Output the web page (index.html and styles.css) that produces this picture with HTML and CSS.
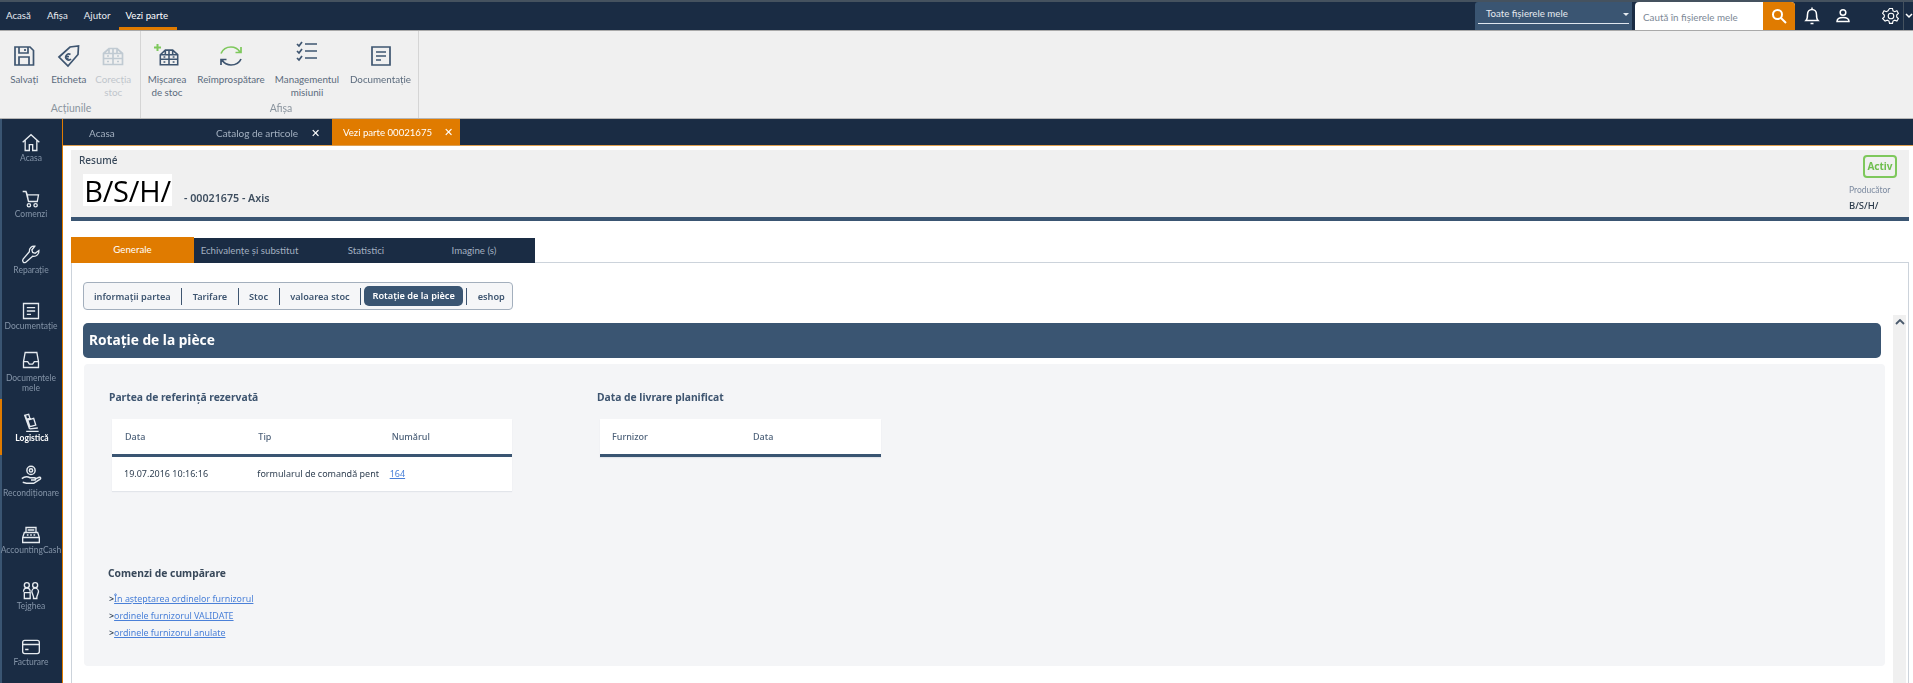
FILE: index.html
```html
<!DOCTYPE html>
<html lang="ro">
<head>
<meta charset="utf-8">
<title>Vezi parte 00021675</title>
<link rel="stylesheet" href="styles.css">
</head>
<body>
<svg class="defs" width="0" height="0" aria-hidden="true">
  <symbol id="warehouse" viewBox="0 0 24 24">
    <path d="M2.500 9.500 8 4.500h8l5.500 5v11h-19zM2.500 14.500h19M12 4.500v16M8 4.500v5M16 4.500v5M2.500 9.500h19M6 17.500h2M16 17.500h2M6 12h2M16 12h2" />
  </symbol>
  <symbol id="doc" viewBox="0 0 24 24">
    <path d="M3 3h18v18H3zM7 8h10M7 12h10M7 16h5" />
  </symbol>
</svg>
<div class="app">
  <header class="topbar">
    <nav class="menu">
      <span class="menu-item">Acasă</span>
      <span class="menu-item">Afișa</span>
      <span class="menu-item">Ajutor</span>
      <span class="menu-item is-active">Vezi parte</span>
    </nav>
    <div class="top-tools">
      <div class="scope"><span class="scope-text">Toate fișierele mele</span><span class="scope-caret"></span></div>
      <div class="search">
        <span class="search-text">Caută în fișierele mele</span>
        <span class="search-btn">
          <svg width="18" height="18" viewBox="0 0 18 18" class="ico-white"><circle cx="7.500" cy="7.500" r="4.500"/><path d="m11 11 5 5"/></svg>
        </span>
      </div>
      <svg class="tool tool-bell" width="18" height="20" viewBox="0 0 18 20"><path d="M3 14.500c1.500-1.500 1.500-3 1.500-6C4.500 5.500 6.500 3.500 9 3.500s4.500 2 4.500 5c0 3 0 4.500 1.500 6zM9 1.500v2M7.500 17.500h3"/></svg>
      <svg class="tool tool-user" width="16" height="16" viewBox="0 0 16 16"><circle cx="8" cy="4.500" r="2.800"/><path d="M2 13.500c0-3 2.500-4 6-4s6 1 6 4z"/></svg>
      <svg class="tool tool-gear" width="18" height="18" viewBox="0 0 18 18"><path d="M7.500 1.500h3l.5 2.300 1.700.9 2.200-.9 1.500 2.600-1.700 1.600v1.900l1.700 1.600-1.500 2.600-2.200-.9-1.700.9-.5 2.300h-3l-.5-2.300-1.700-.9-2.200.9L.6 11.500l1.700-1.600V8L.6 6.400l1.500-2.600 2.200.9L6 3.800z"/><circle cx="9" cy="9" r="2.800"/></svg>
      <span class="tool-more"><svg width="8" height="6" viewBox="0 0 8 6"><path d="m1 1 3 3 3-3"/></svg></span>
    </div>
  </header>

  <section class="ribbon">
    <div class="rgroup rgroup-a">
      <div class="ritems">
        <div class="ritem w-a">
          <svg class="ricon" width="24" height="24" viewBox="0 0 24 24"><path d="M3 3h15l3.500 3.500V21H3zM7 3v6h9V3M13 5v2M7 21v-8h10v8"/></svg>
          <span>Salvați</span>
        </div>
        <div class="ritem w-a">
          <svg class="ricon" width="24" height="24" viewBox="0 0 24 24"><path d="M2 13 13 3l8.500-1-.5 8.500L11 22zM17.500 5.500h.01M13.500 10.500a3 3 0 1 0 .5 4.500M8 12.500h4M8.500 14.500h3"/></svg>
          <span>Eticheta</span>
        </div>
        <div class="ritem w-a is-disabled">
          <svg class="ricon" width="26" height="24" viewBox="0 0 24 24"><use href="#warehouse"/></svg>
          <span>Corecția<br>stoc</span>
        </div>
      </div>
      <div class="rlabel">Acțiunile</div>
    </div>
    <div class="rgroup rgroup-b">
      <div class="ritems">
        <div class="ritem w-b1">
          <svg class="ricon" width="26" height="24" viewBox="0 0 26 24"><g transform="translate(4 2)"><use href="#warehouse" width="22" height="22"/></g><path class="green-fill" d="M2.500 0h2v2.500H7v2H4.500V7h-2V4.500H0v-2h2.500z"/></svg>
          <span>Mișcarea<br>de stoc</span>
        </div>
        <div class="ritem w-b2">
          <svg class="ricon" width="24" height="24" viewBox="0 0 24 24"><path class="green" d="M2 9.500C4 5 8 3 12 3s7 2 9 5M22 3v5.500h-5.500"/><path d="M22 15c-2 4.500-6 6-10 6s-7-2-9-5M2 21v-5.500h5.500"/></svg>
          <span>Reîmprospătare</span>
        </div>
        <div class="ritem w-b3">
          <svg class="ricon ricon-up" width="24" height="24" viewBox="0 0 24 24"><path d="M2 5l2 2 3-4M10 5h12M2 12l2 2 3-4M10 12h12M2 19l2 2 3-4M10 19h12"/></svg>
          <span>Managementul<br>misiunii</span>
        </div>
        <div class="ritem w-b4">
          <svg class="ricon" width="24" height="24" viewBox="0 0 24 24"><use href="#doc"/></svg>
          <span>Documentație</span>
        </div>
      </div>
      <div class="rlabel">Afișa</div>
    </div>
  </section>

  <div class="main">
    <aside class="side">
      <div class="side-item">
        <svg class="side-ico" width="20" height="20" viewBox="0 0 24 24"><path d="M2 11 12 2l10 9M5 9v12h5v-7h4v7h5V9"/></svg>
        <span>Acasa</span>
      </div>
      <div class="side-item">
        <svg class="side-ico" width="20" height="20" viewBox="0 0 24 24"><path d="M2 3h4l1.500 4H21l-1.500 8H9L6 3M7.500 7 9 15"/><circle cx="9.500" cy="19.500" r="2"/><circle cx="17.500" cy="19.500" r="2"/></svg>
        <span>Comenzi</span>
      </div>
      <div class="side-item">
        <svg class="side-ico" width="20" height="20" viewBox="0 0 24 24"><path d="M21.500 6.500 17 10l-3-1-1-3 3.500-4.500C13 1 9.500 3.500 10 8L2.500 17c-1.500 2 .5 5 3 4L14 13.500c4.500 1 8-3 7.500-7z"/></svg>
        <span>Reparație</span>
      </div>
      <div class="side-item">
        <svg class="side-ico" width="20" height="20" viewBox="0 0 24 24"><use href="#doc"/></svg>
        <span>Documentație</span>
      </div>
      <div class="side-item side-two">
        <svg class="side-ico" width="20" height="20" viewBox="0 0 24 24"><path d="M3 14 5 3h14l2 11v7H3zM3 14h5l2 3h4l2-3h5"/></svg>
        <span>Documentele<br>mele</span>
      </div>
      <div class="side-item is-active">
        <svg class="side-ico" width="20" height="20" viewBox="0 0 24 24"><path d="M4 2.500 8 1.500l1.500 5-4 1zM7 8.500l7-2 2.500 8-7 2zM3 2l6 17M5 22h15M9 19l10-1"/></svg>
        <span>Logistică</span>
      </div>
      <div class="side-item side-low">
        <svg class="side-ico" width="22" height="22" viewBox="0 0 24 24"><circle cx="12" cy="7" r="4.500"/><circle cx="12" cy="7" r="1.800"/><path d="M2 16c3-2.500 6-2.500 9-1h5c1.500 0 1.500 2.500 0 2.500h-4M16 16.500l5-2c1.500-.5 2 1 1 2l-7 4.500H7l-4-1"/></svg>
        <span>Recondiționare</span>
      </div>
      <div class="side-item">
        <svg class="side-ico" width="20" height="20" viewBox="0 0 24 24"><path d="M6 3h12v6H6zM4 9h16l2 6v6H2v-6zM2 15h20M8 6h8M7 12h2M11 12h2M15 12h2"/></svg>
        <span>AccountingCash</span>
      </div>
      <div class="side-item">
        <svg class="side-ico" width="20" height="20" viewBox="0 0 24 24"><circle cx="7" cy="5" r="3"/><circle cx="17" cy="5" r="3"/><path d="M3 13c0-3 2-4.500 4-4.500s4 1.500 4 4.500M13 13c0-2.500 2-4.500 4-4.500s4 2 4 4.500l-2 6v2h-4v-2zM4 14h7v7H4z"/></svg>
        <span>Tejghea</span>
      </div>
      <div class="side-item">
        <svg class="side-ico" width="20" height="20" viewBox="0 0 24 24"><rect x="2" y="4" width="20" height="16" rx="2.500"/><path d="M2 9h20M5 15h4"/></svg>
        <span>Facturare</span>
      </div>
    </aside>

    <div class="work">
      <div class="doc-tabs">
        <div class="doc-tab tab-home">Acasa</div>
        <div class="doc-tab tab-cat">Catalog de articole <span class="doc-x">✕</span></div>
        <div class="doc-tab tab-cur">Vezi parte 00021675 <span class="doc-x">✕</span></div>
      </div>
      <div class="page">
        <section class="summary">
          <div class="sum-left">
            <div class="sum-title">Resumé</div>
            <div class="sum-row">
              <div class="logo">B/S/H/</div>
              <div class="sum-ref">- 00021675 - Axis</div>
            </div>
          </div>
          <div class="sum-right">
            <div class="badge">Activ</div>
            <div class="maker">
              <div class="maker-label">Producător</div>
              <div class="maker-value">B/S/H/</div>
            </div>
          </div>
        </section>

        <div class="tabs">
          <div class="tab tab-on">Generale</div>
          <div class="tab t-2">Echivalențe și substitut</div>
          <div class="tab t-3">Statistici</div>
          <div class="tab t-4">Imagine (s)</div>
        </div>

        <section class="pane">
          <nav class="subnav">
            <span class="sub">informații partea</span>
            <span class="sub">Tarifare</span>
            <span class="sub">Stoc</span>
            <span class="sub sub-before">valoarea stoc</span>
            <span class="sub-pill">Rotație de la pièce</span>
            <span class="sub sub-last">eshop</span>
          </nav>
          <h1 class="band">Rotație de la pièce</h1>
          <div class="scrollbar"><svg width="10" height="6" viewBox="0 0 10 6"><path d="m1 5 4-4 4 4"/></svg></div>
          <div class="panel">
            <div class="cols">
              <div class="col-a">
                <h2 class="ptitle">Partea de referință rezervată</h2>
                <table class="grid grid-a">
                  <thead><tr><th>Data</th><th>Tip</th><th>Numărul</th></tr></thead>
                  <tbody><tr>
                    <td>19.07.2016 10:16:16</td>
                    <td>formularul de comandă pent</td>
                    <td class="cell-link"><a class="lnk" href="#">164</a></td>
                  </tr></tbody>
                </table>
              </div>
              <div class="col-b">
                <h2 class="ptitle">Data de livrare planificat</h2>
                <table class="grid grid-b">
                  <thead><tr><th>Furnizor</th><th>Data</th></tr></thead>
                </table>
              </div>
            </div>
            <h2 class="ptitle ptitle-orders">Comenzi de cumpărare</h2>
            <ul class="links">
              <li><a class="lnk" href="#">În așteptarea ordinelor furnizorul</a></li>
              <li><a class="lnk" href="#">ordinele furnizorul VALIDATE</a></li>
              <li><a class="lnk" href="#">ordinele furnizorul anulate</a></li>
            </ul>
          </div>
        </section>
      </div>
    </div>
  </div>
</div>
</body>
</html>
```
FILE: styles.css
```css
* { box-sizing: border-box; }
html, body { margin: 0; padding: 0; height: 683px; overflow: hidden; background: #fff; }
body { font-family: "Noto Sans", "Open Sans", sans-serif; color: #2e3e50; }
.defs { position: absolute; }
.app { width: 1913px; height: 683px; display: flex; flex-direction: column; filter: blur(.35px); }

/* top bar */
.topbar { height: 31px; background: #1a2c44; border-top: 2px solid #45525f; border-bottom: 1px solid #a9a9a9; display: flex; justify-content: space-between; font-family: Lato, sans-serif; }
.menu { display: flex; }
.menu-item { height: 28px; line-height: 27px; font-size: 9.700px; color: #e6ebf0; padding: 0 8px; }
.menu-item:first-child { padding-left: 6px; }
.menu-item.is-active { color: #fff; border-bottom: 3px solid #e07b00; padding: 0 9px 0 7px; }
.top-tools { display: flex; align-items: stretch; position: relative; height: 28px; }
.scope { width: 157px; background: #3a5572; position: relative; display: flex; align-items: flex-start; padding: 4px 3px 0 3px; border-radius: 3px 0 0 0; }
.scope-text { flex: 1; height: 18px; border-bottom: 1px solid #dfe6ee; color: #e6ebf0; font-size: 9.700px; line-height: 15px; padding-left: 8px; }
.scope-caret { position: absolute; right: 3px; top: 11px; border: 3px solid transparent; border-top: 3px solid #e6ebf0; border-bottom: 0; }
.search { width: 160px; margin-left: 3px; background: #fff; display: flex; border-radius: 4px 4px 0 0; overflow: hidden; }
.search-text { flex: 1; font-size: 9.800px; line-height: 31px; color: #7c8896; padding-left: 8px; }
.search-btn { width: 32px; background: #e07b00; display: flex; align-items: center; justify-content: center; }
.ico-white { fill: none; stroke: #fff; stroke-width: 2; }
.tool { fill: none; stroke: #fff; stroke-width: 1.500; align-self: center; }
.tool-bell { margin-left: 8px; }
.tool-user { margin-left: 14px; }
.tool-gear { margin-left: 31px; stroke-width: 1.100; }
.tool-more { width: 10px; margin-left: 3px; border-left: 1px solid #45525f; display: flex; align-items: center; justify-content: center; overflow: hidden; }
.tool-more svg { fill: none; stroke: #fff; stroke-width: 1.500; flex: none; }

/* ribbon */
.ribbon { height: 88px; background: #f0f0f0; display: flex; border-bottom: 1px solid #b5b5b5; font-family: Lato, sans-serif; }
.rgroup { display: flex; flex-direction: column; border-right: 1px solid #d5d5d5; }
.rgroup-a { width: 141px; padding-left: 2px; }
.rgroup-b { width: 278px; padding-left: 3px; }
.ritems { display: flex; height: 70px; }
.ritem { display: flex; flex-direction: column; align-items: center; font-size: 9.800px; line-height: 13px; color: #5b6b7d; text-align: center; padding-top: 13px; flex: none; }
.ritem span { display: block; margin-top: 5px; white-space: nowrap; }
.w-a { width: 44.500px; }
.w-b1 { width: 46px; }
.w-b2 { width: 82px; }
.w-b3 { width: 70px; }
.w-b4 { width: 77px; }
.ricon { fill: none; stroke: #3e5570; stroke-width: 1.700; flex: none; }
.ricon-up { margin-top: -5px; margin-bottom: 5px; }
.green { stroke: #7ec85c; }
.green-fill { fill: #7ec85c; stroke: none; }
.is-disabled { color: #c0c6cc; }
.is-disabled .ricon { stroke: #c0cad2; }
.rlabel { text-align: center; font-size: 10.500px; line-height: 15px; color: #8a949e; }

/* main */
.main { flex: 1; display: flex; min-height: 0; }
.side { width: 63px; flex: none; background: #1a2c44; border-left: 2px solid #3a5572; border-right: 1px solid #e07b00; display: flex; flex-direction: column; font-family: Lato, sans-serif; }
.side-item { height: 56px; flex: none; display: flex; flex-direction: column; align-items: center; padding-top: 14px; font-size: 8.500px; line-height: 10px; color: #8494a8; text-align: center; margin-left: -2px; }
.side-item span { display: block; margin-top: 0; white-space: nowrap; }
.side-two { padding-top: 7px; }
.side-two span { margin-top: 3px; }
.side-low { padding-top: 9px; }
.side-low span { margin-top: 2px; }
.side-ico { fill: none; stroke: #e6ebf0; stroke-width: 1.600; flex: none; }
.side-item.is-active { color: #fff; font-weight: 700; border-left: 2px solid #e07b00; }
.work { flex: 1; display: flex; flex-direction: column; min-width: 0; }
.doc-tabs { height: 27px; background: #1a2c44; border-bottom: 1px solid #e0a050; display: flex; font-family: Lato, sans-serif; }
.doc-tab { font-size: 10px; line-height: 28px; color: #a3b0c0; white-space: nowrap; }
.tab-home { width: 137px; padding-left: 26px; }
.tab-cat { width: 132px; padding-left: 16px; }
.tab-cur { width: 128px; padding-left: 11px; background: #e07b00; color: #fff; font-size: 9.600px; line-height: 26px; }
.doc-x { color: #fff; font-size: 11px; margin-left: 10px; }

.page { flex: 1; min-height: 0; display: flex; flex-direction: column; padding: 4px 4px 0 8px; }
.summary { height: 71px; flex: none; background: #f0f0f0; border-bottom: 4px solid #3a5572; display: flex; justify-content: space-between; padding: 0 12px 0 8px; }
.sum-title { font-size: 10px; line-height: 15px; font-weight: 500; padding-top: 3px; height: 19px; color: #38485a; }
.sum-row { display: flex; align-items: flex-end; padding-left: 4px; margin-top: 5px; }
.logo { width: 89px; height: 32px; background: #fff; color: #000; font-family: "Open Sans", sans-serif; font-size: 29px; line-height: 33px; text-align: center; letter-spacing: -.2px; }
.sum-ref { font-size: 10.700px; line-height: 15px; font-weight: 600; color: #3f4f60; margin-left: 12px; }
.sum-right { display: flex; flex-direction: column; align-items: flex-end; padding-top: 5px; }
.badge { width: 34px; height: 23px; border: 2px solid #7ec85c; border-radius: 4px; color: #6fbe4e; font-size: 10px; font-weight: 700; line-height: 19px; text-align: center; }
.maker { width: 48px; margin-top: 6px; }
.maker-label { font-family: Lato, sans-serif; font-size: 8.500px; line-height: 13px; color: #7c8aa0; white-space: nowrap; }
.maker-value { font-size: 9.500px; line-height: 15px; font-weight: 500; color: #2a3a4a; margin-top: 1px; }

.tabs { display: flex; margin-top: 16px; height: 26px; flex: none; align-items: flex-end; position: relative; z-index: 1; font-family: Lato, sans-serif; }
.tab { height: 25px; background: #1a2c44; color: #a3b0c0; font-size: 9.700px; line-height: 25px; text-align: center; white-space: nowrap; }
.tab-on { height: 26px; width: 123px; background: #e07b00; color: #fff; }
.t-2 { width: 111px; }
.t-3 { width: 122px; }
.t-4 { width: 108px; padding-right: 14px; }

.pane { flex: 1; min-height: 0; margin-top: -1px; border: 1px solid #ccd3db; border-bottom: 0; padding: 19px 0 0 11px; position: relative; }
.subnav { width: 430px; height: 28px; background: #f5f6f8; border: 1.500px solid #a3afbd; border-radius: 4px; display: flex; align-items: center; padding-left: 10px; }
.sub { font-size: 9.200px; font-weight: 600; color: #3e5570; line-height: 17px; padding-right: 10.500px; margin-right: 10.500px; border-right: 1px solid #3e5570; white-space: nowrap; }
.sub-before { margin-right: 3px; }
.sub-pill { height: 20px; line-height: 20px; background: #3a5572; color: #fff; font-size: 9.200px; font-weight: 600; border-radius: 5px; white-space: nowrap; width: 99px; text-align: center; flex: none; }
.sub-last { border-left: 1px solid #3e5570; border-right: 0; margin: 0 0 0 3px; padding: 0 0 0 10.500px; }
.band { margin: 13px 27px 0 0; height: 35px; background: #3a5572; border-radius: 5px; color: #fff; font-size: 13.700px; font-weight: 700; line-height: 34px; padding-left: 6px; }
.scrollbar { position: absolute; left: 1821px; top: 52px; bottom: 0; width: 13px; background: #f0f0f0; display: flex; justify-content: center; padding-top: 4px; }
.scrollbar svg { fill: none; stroke: #4a5a6c; stroke-width: 1.800; }
.panel { margin: 6px 23px 0 1px; height: 302px; background: #f4f5f7; border-radius: 4px; padding: 26px 0 0 25px; }
.cols { display: grid; grid-template-columns: 488px 1fr; height: 176px; }
.ptitle { margin: 0; font-size: 10.300px; line-height: 15px; font-weight: 700; color: #3e5570; }
.grid { margin: 14px 0 0 3px; border-collapse: collapse; table-layout: fixed; background: #fff; box-shadow: 0 1px 1px #e2e5ea; font-size: 9px; }
.grid-a { width: 400px; }
.grid-b { width: 281px; }
.grid th { height: 36px; border-bottom: 3px solid #3a5572; text-align: left; font-weight: 500; color: #4e627a; padding: 0 0 0 13px; }
.grid-b th:first-child { width: 140px; padding-left: 12px; }
.grid td { height: 36px; padding: 0 0 0 12px; color: #2e3e50; white-space: nowrap; }
.grid .cell-link { padding-left: 11px; }
.lnk { color: #4a80d8; text-decoration: underline; }
.ptitle-orders { color: #38485a; margin-left: -1px; }
.links { list-style: none; margin: 9px 0 0; padding: 0; font-size: 8.900px; line-height: 17px; }
.links li::before { content: ">"; color: #2e3e50; font-weight: 600; }
```
